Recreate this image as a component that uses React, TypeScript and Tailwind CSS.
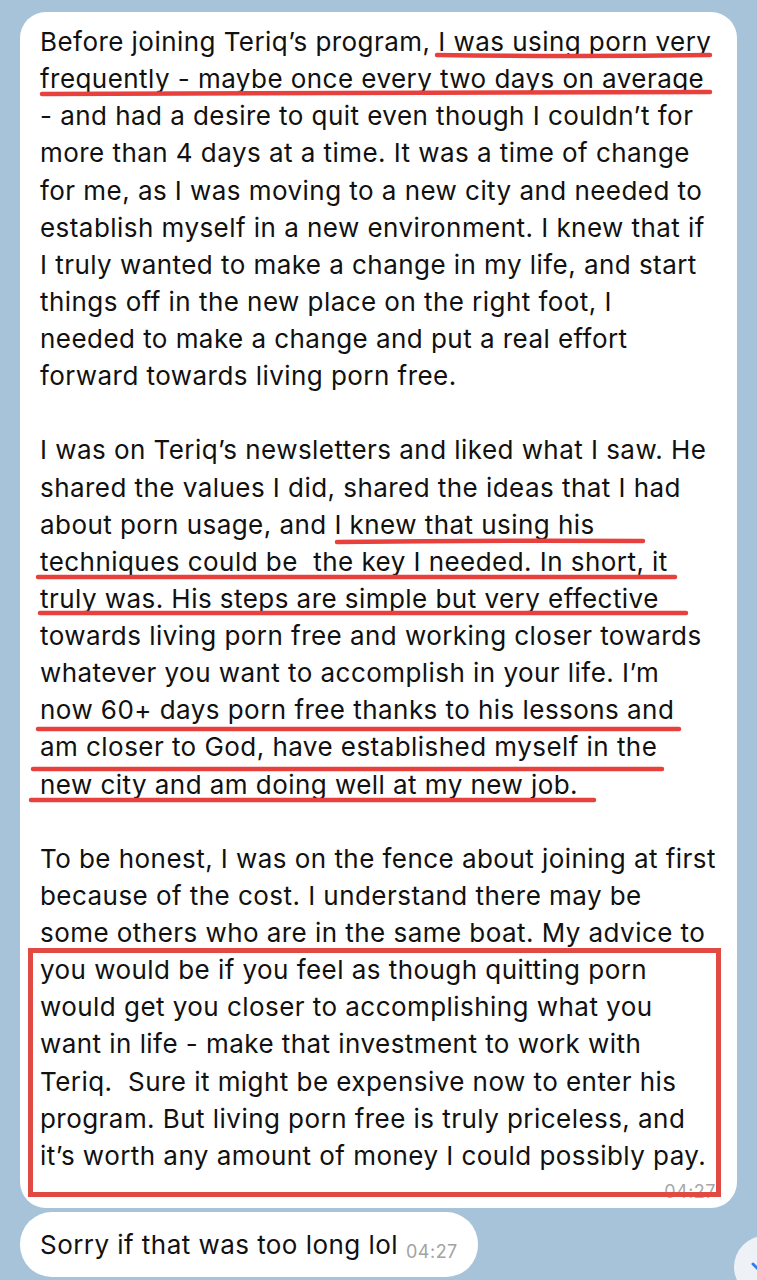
import React from 'react';

const font = { fontFamily: 'Inter, "Liberation Sans", sans-serif' };

// each entry is one visual line of the long message; '' is a blank line
const lines = [
  'Before joining Teriq’s program, I was using porn very',
  'frequently - maybe once every two days on average',
  '- and had a desire to quit even though I couldn’t for',
  'more than 4 days at a time. It was a time of change',
  'for me, as I was moving to a new city and needed to',
  'establish myself in a new environment. I knew that if',
  'I truly wanted to make a change in my life, and start',
  'things off in the new place on the right foot, I',
  'needed to make a change and put a real effort',
  'forward towards living porn free.',
  '',
  'I was on Teriq’s newsletters and liked what I saw. He',
  'shared the values I did, shared the ideas that I had',
  'about porn usage, and I knew that using his',
  'techniques could be  the key I needed. In short, it',
  'truly was. His steps are simple but very effective',
  'towards living porn free and working closer towards',
  'whatever you want to accomplish in your life. I’m',
  'now 60+ days porn free thanks to his lessons and',
  'am closer to God, have established myself in the',
  'new city and am doing well at my new job.',
  '',
  'To be honest, I was on the fence about joining at first',
  'because of the cost. I understand there may be',
  'some others who are in the same boat. My advice to',
  'you would be if you feel as though quitting porn',
  'would get you closer to accomplishing what you',
  'want in life - make that investment to work with',
  'Teriq.  Sure it might be expensive now to enter his',
  'program. But living porn free is truly priceless, and',
  'it’s worth any amount of money I could possibly pay.',
];

// hand drawn red underlines, in bubble coordinates
const marks = [
  'M417 43 Q550 45 690 43',
  'M22 82 Q360 80 690 80',
  'M317 530 Q470 528 623 529',
  'M18 565 Q340 566 655 565',
  'M20 601 Q340 602 666 601',
  'M18 717 Q340 718 659 717',
  'M13 757 Q330 758 642 757',
  'M11 788 Q300 789 574 788',
];

export default function App() {
  return (
    <div className="relative h-[1280px] w-[757px] overflow-hidden bg-[#a6c3da] pl-[20px] pt-[12px]" style={font}>
      {/* long message */}
      <div className="relative w-[717px] rounded-[26px] bg-white pl-[20px] pt-[11px] text-[26px] leading-[37.13px] tracking-[0.45px] text-[#111]">
        {lines.map((l, i) => (
          <div key={i} className="h-[37.13px] whitespace-pre">
            {l}
          </div>
        ))}
        <div className="flex h-[34px] items-start justify-end pr-[21px] pt-[8px] text-[18px] leading-[20px] tracking-[0.5px] text-[#a8a8a8]">
          04:27
        </div>

        <svg className="pointer-events-none absolute left-0 top-0" width="717" height="1196">
          {marks.map((d, i) => (
            <path key={i} d={d} stroke="#e8403d" strokeWidth="4.5" strokeLinecap="round" fill="none" />
          ))}
        </svg>
        <div className="pointer-events-none absolute left-[8px] top-[936px] h-[249px] w-[693px] border-[5px] border-[#e14a43]" />
      </div>

      {/* short message */}
      <div className="mt-[4px] flex h-[65px] w-[458px] items-center rounded-[32px] bg-white pl-[20px]">
        <span className="text-[26px] tracking-[0.45px] text-[#111]">Sorry if that was too long lol</span>
        <span className="ml-[8px] mt-[14px] text-[18px] tracking-[0.5px] text-[#a3a3a3]">04:27</span>
      </div>

      {/* scroll to bottom button */}
      <div className="absolute left-[734px] top-[1236px] flex h-[62px] w-[62px] items-center rounded-full bg-[#eef2f6] pl-[16px]">
        <svg width="20" height="20" viewBox="0 0 20 20">
          <path d="M3 7 L10 14 L17 7" stroke="#2f80ed" strokeWidth="3" strokeLinecap="round" strokeLinejoin="round" fill="none" />
        </svg>
      </div>
    </div>
  );
}
